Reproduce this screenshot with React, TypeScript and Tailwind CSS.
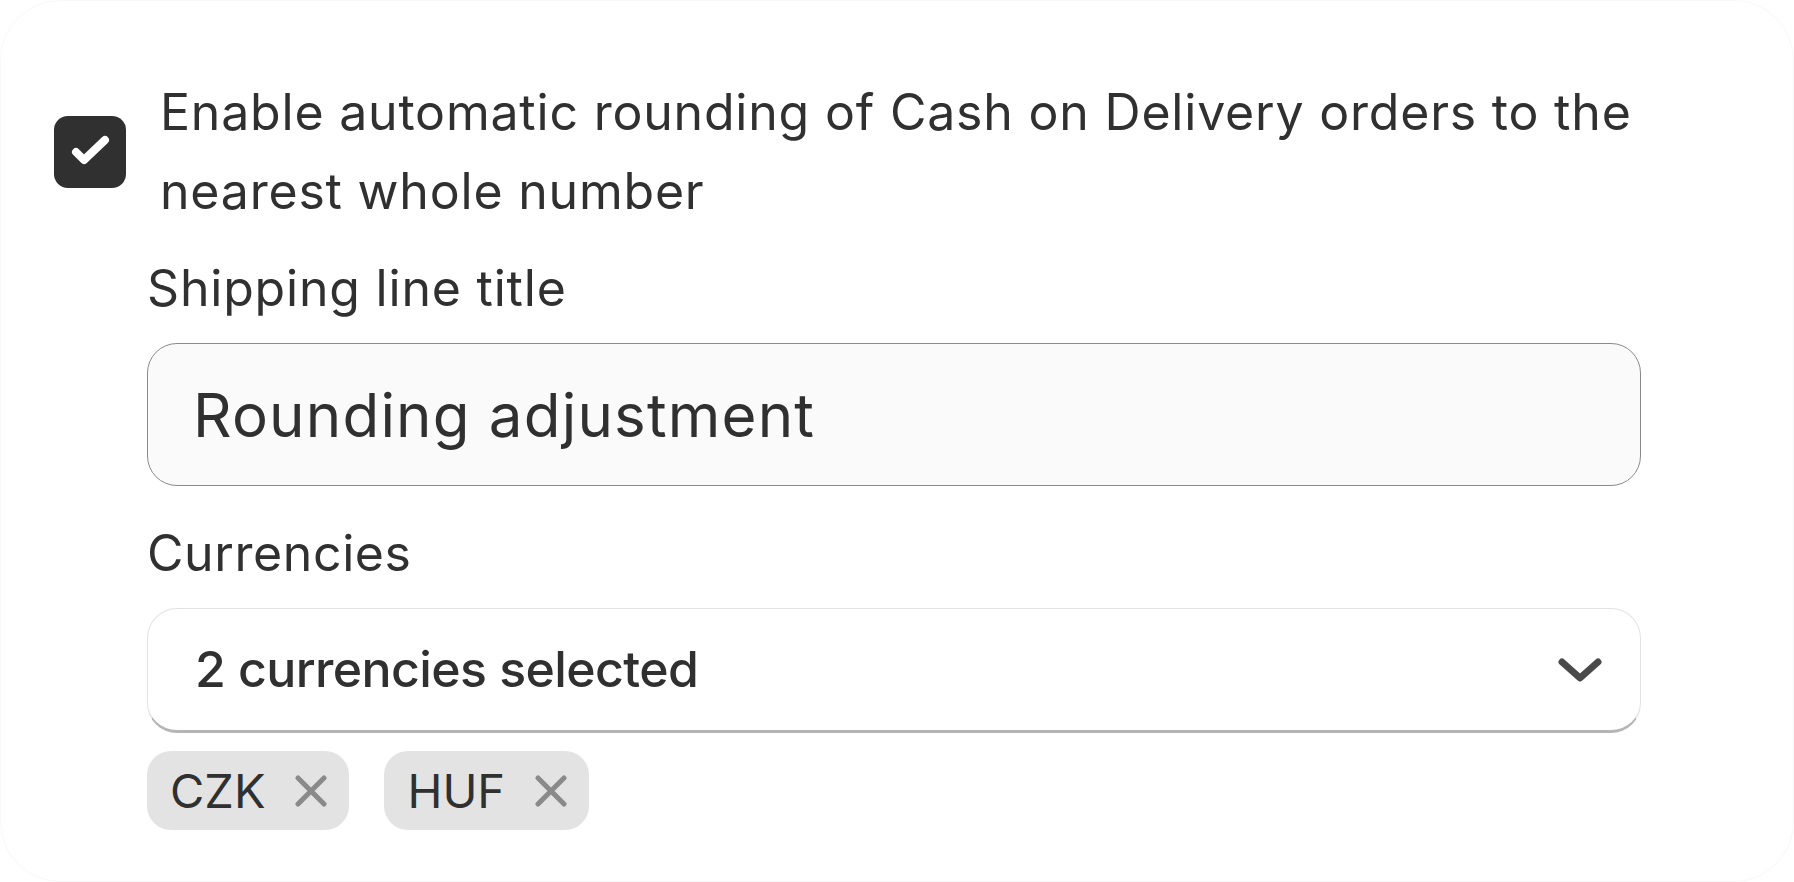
const text = "text-[#303030]";

function CheckIcon() {
  return (
    <svg viewBox="0 0 72 72" className="h-[72px] w-[72px]">
      <path d="M22 36 L30 44 L51 24" fill="none" stroke="white" strokeWidth="8" strokeLinecap="round" strokeLinejoin="round" />
    </svg>
  );
}

function ChevronDown() {
  return (
    <svg viewBox="0 0 44 26" className="h-[26px] w-[44px]">
      <path d="M4 5 L22 21 L40 5" fill="none" stroke="#4a4a4a" strokeWidth="7" strokeLinecap="round" strokeLinejoin="round" />
    </svg>
  );
}

function RemoveIcon() {
  return (
    <svg viewBox="0 0 32 32" className="h-[32px] w-[32px]">
      <path d="M3 3 L29 29 M29 3 L3 29" fill="none" stroke="#8a8a8a" strokeWidth="5" strokeLinecap="round" />
    </svg>
  );
}

function Tag({ label }: { label: string }) {
  return (
    <span className="flex h-[79px] items-center gap-[30px] rounded-[24px] bg-[#e3e3e3] pl-[23px] pr-[22px]">
      <span className={`text-[47px] leading-none ${text}`}>{label}</span>
      <RemoveIcon />
    </span>
  );
}

export default function App() {
  return (
    <div className="h-[882px] w-[1794px] bg-white" style={{ fontFamily: "Inter, 'Noto Sans', sans-serif" }}>
      <div className="h-full w-full rounded-[60px] border border-[#f8f8f8] bg-white pt-[72px]">
        {/* checkbox row */}
        <label className="flex items-center gap-[34px] pl-[53px]">
          <span className="flex h-[72px] w-[72px] shrink-0 items-center justify-center rounded-[14px] bg-[#303030]">
            <CheckIcon />
          </span>
          <span className={`w-[1500px] text-[50px] leading-[79px] tracking-[0.8px] ${text}`}>
            Enable automatic rounding of Cash on Delivery orders to the nearest whole number
          </span>
        </label>

        <div className="pl-[146px] pr-[152px]">
          <div className={`mt-[18px] text-[50px] leading-[79px] tracking-[0.8px] ${text}`}>Shipping line title</div>
          <div className="mt-[15px] flex h-[143px] items-center rounded-[30px] border-[1.5px] border-[#8a8a8a] bg-[#fafafa] pl-[45px]">
            <span className={`text-[60px] tracking-[1.2px] ${text}`}>Rounding adjustment</span>
          </div>

          <div className={`mt-[28px] text-[50px] leading-[79px] tracking-[0.6px] ${text}`}>Currencies</div>
          <div className="mt-[15px] flex h-[125px] items-center justify-between rounded-[30px] border-[1.5px] border-[#e3e3e3] border-b-[3px] border-b-[#b5b5b5] bg-white pl-[47px] pr-[38px]">
            <span className={`text-[50px] font-medium tracking-[-0.6px] ${text}`}>2 currencies selected</span>
            <ChevronDown />
          </div>

          <div className="mt-[18px] flex gap-[35px]">
            <Tag label="CZK" />
            <Tag label="HUF" />
          </div>
        </div>
      </div>
    </div>
  );
}
